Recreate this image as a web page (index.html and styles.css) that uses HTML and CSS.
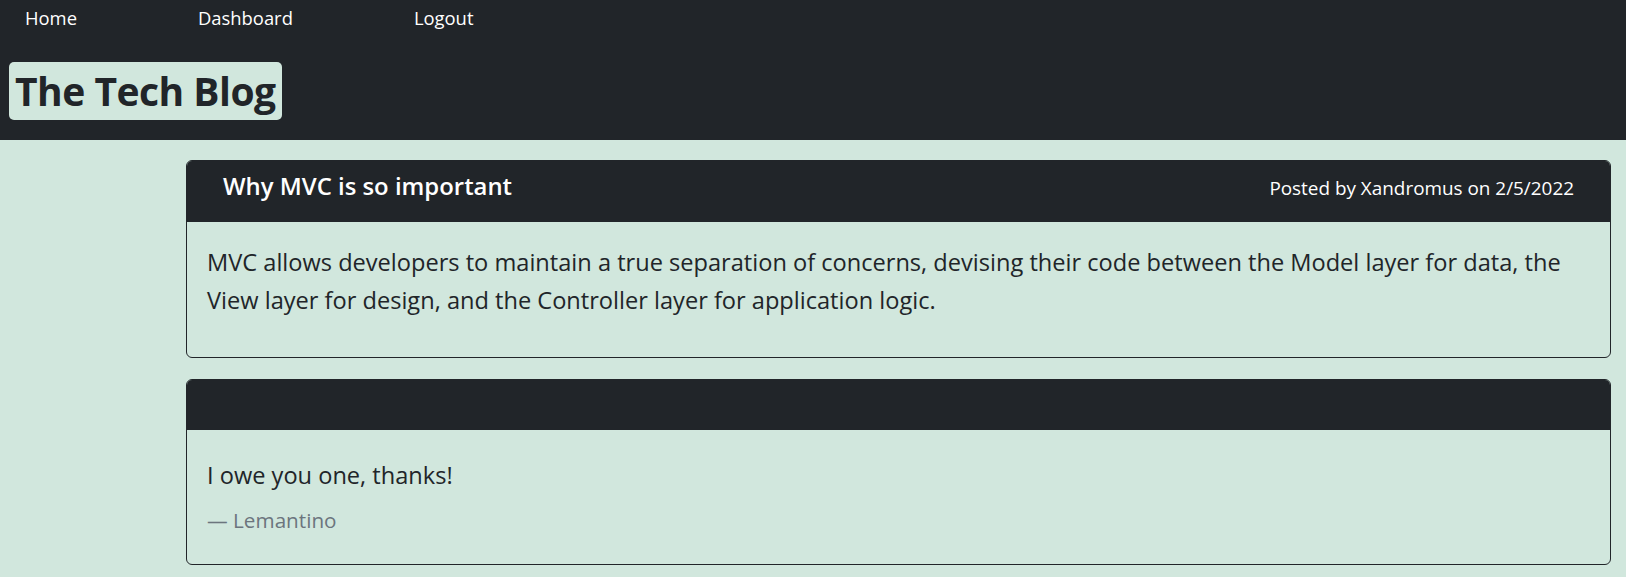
FILE: index.html
```html
<!DOCTYPE html>
<html lang="en">
<head>
<meta charset="utf-8">
<title>The Tech Blog</title>
<link rel="stylesheet" href="styles.css">
</head>
<body>
<header class="site-header">
  <nav class="nav">
    <a class="nav-link" href="#">Home</a>
    <a class="nav-link" href="#">Dashboard</a>
    <a class="nav-link" href="#">Logout</a>
  </nav>
  <h1 class="brand">The Tech Blog</h1>
</header>
<main class="content">
  <article class="card">
    <div class="card-header">
      <h5 class="card-title">Why MVC is so important</h5>
      <span class="card-meta">Posted by Xandromus on 2/5/2022</span>
    </div>
    <div class="card-body post-body">
      <p class="post-text">MVC allows developers to maintain a true separation of concerns, devising their code between the Model layer for data, the View layer for design, and the Controller layer for application logic.</p>
    </div>
  </article>
  <article class="card">
    <div class="card-header card-header-empty"></div>
    <div class="card-body comment-body">
      <blockquote class="comment">
        <p class="comment-text">I owe you one, thanks!</p>
        <footer class="comment-author">— Lemantino</footer>
      </blockquote>
    </div>
  </article>
</main>
</body>
</html>
```
FILE: styles.css
```css
* { box-sizing: border-box; }
html, body { margin: 0; padding: 0; }
body {
  background: #d1e7dd;
  color: #212529;
  font-family: "Open Sans", "Noto Sans", sans-serif;
  min-height: 577px;
}
.site-header {
  background: #212529;
  padding: 0 0 20px 9px;
}
.nav {
  display: flex;
  gap: 121px;
  padding-left: 16px;
  height: 36px;
  align-items: center;
}
.nav-link {
  color: #ffffff;
  text-decoration: none;
  font-size: 18.4px;
  line-height: 36px;
}
.brand {
  display: inline-block;
  margin: 26px 0 0 0;
  padding: 0 6px;
  height: 58px;
  line-height: 58px;
  font-size: 39px;
  font-weight: 700;
  letter-spacing: -0.5px;
  background: #d1e7dd;
  color: #212529;
  border-radius: 5px;
}
.content {
  display: flex;
  flex-direction: column;
  gap: 21px;
  padding: 20px 15px 12px 186px;
}
.card {
  border: 1px solid #212529;
  border-radius: 6px;
  overflow: hidden;
}
.card-header {
  background: #212529;
  color: #ffffff;
  height: 61px;
  padding: 10.5px 36px 0 36px;
  display: flex;
  align-items: baseline;
  justify-content: space-between;
}
.card-header-empty { height: 50px; }
.card-title {
  margin: 0;
  font-size: 23.9px;
  line-height: 28.7px;
  font-weight: 600;
}
.card-meta {
  font-size: 18.9px;
  line-height: 26px;
}
.card-body {
  padding: 20.5px 20px 19px 20px;
}
.post-text {
  margin: 0 0 18px 0;
  font-size: 23.6px;
  line-height: 38.5px;
}
.comment-body { padding-top: 27.5px; padding-bottom: 28px; }
.comment { margin: 0; }
.comment-text {
  margin: 0 0 12px 0;
  font-size: 23.6px;
  line-height: 36px;
}
.comment-author {
  font-size: 20.7px;
  line-height: 31px;
  color: #6c757d;
}
```
